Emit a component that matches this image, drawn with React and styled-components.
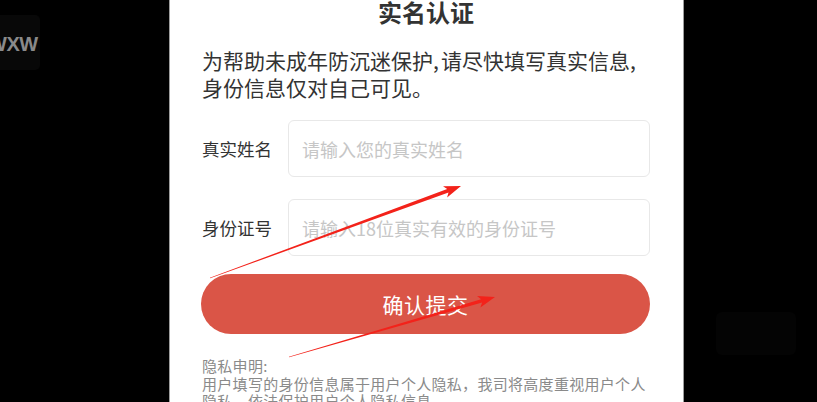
import React from 'react';
import styled, { createGlobalStyle } from 'styled-components';

const Global = createGlobalStyle`
  html, body { margin: 0; padding: 0; background: #000; overflow: hidden; }
  body { font-family: "Noto Sans CJK SC", "Noto Sans", sans-serif; }
  * { box-sizing: border-box; }
`;

const Screen = styled.div`
  position: relative;
  width: 817px;
  height: 402px;
  overflow: hidden;
  background: #000;
  display: flex;
`;

const LeftRail = styled.div`
  width: 169px;
  flex-shrink: 0;
  padding-top: 15px;
`;

const Tile = styled.div`
  width: 40px;
  height: 55px;
  background: #080808;
  overflow: hidden;
  padding-top: 19px;
  border-radius: 0 5px 5px 0;
`;

const TileText = styled.div`
  font-family: "Liberation Sans", Arial, sans-serif;
  font-weight: 700;
  font-size: 20px;
  line-height: 20px;
  color: #8a8a8a;
  margin-left: -12px;
  letter-spacing: -0.5px;
  white-space: nowrap;
`;

const Modal = styled.div`
  width: 515px;
  flex-shrink: 0;
  background: #fff;
  border-left: 1px solid #9d9d9d;
  border-right: 1px solid #9d9d9d;
  padding: 0 33px 0 32px;
`;

const Title = styled.h2`
  margin: 0;
  text-align: center;
  font-size: 24px;
  line-height: 24px;
  font-weight: 700;
  color: #333;
`;

const Intro = styled.p`
  margin: 23px 0 0;
  font-size: 21px;
  line-height: 27px;
  color: #333;
  white-space: nowrap;
`;

const Comma = styled.span`
  display: inline-block;
  width: 8px;
`;

const FormRow = styled.label`
  display: flex;
  align-items: center;
  height: 57px;
  margin-top: ${(p) => p.$gap}px;
`;

const FieldLabel = styled.span`
  width: 86px;
  flex-shrink: 0;
  font-size: 17.5px;
  color: #333;
`;

const Field = styled.input`
  flex: 1;
  min-width: 0;
  height: 57px;
  border: 1px solid #e8e8e8;
  border-radius: 6px;
  padding: 0 13px;
  font-family: inherit;
  font-size: 18px;
  color: #333;
  outline: none;
  background: #fff;
  &::placeholder { color: #c6c6c6; }
`;

const SubmitButton = styled.button`
  display: block;
  margin: 18px 0 0 -1px;
  height: 60px;
  width: 449px;
  border: none;
  border-radius: 30px;
  background: #da5547;
  color: #fff;
  font-family: inherit;
  font-size: 21px;
  letter-spacing: 0.5px;
  padding: 0;
`;

const Privacy = styled.div`
  margin-top: 23px;
  font-size: 15px;
  line-height: 17.5px;
  letter-spacing: 0.3px;
  color: #8a8a8a;
`;

const RightRail = styled.div`
  flex: 1;
  padding: 312px 0 0 32px;
`;

const GhostBox = styled.div`
  width: 80px;
  height: 43px;
  background: #040404;
  border-radius: 6px;
`;

const Overlay = styled.svg`
  position: absolute;
  left: 0;
  top: 0;
  pointer-events: none;
`;

function arrowPoints(tail, tip, headLen, headHalf, shaftBase) {
  const dx = tip[0] - tail[0];
  const dy = tip[1] - tail[1];
  const len = Math.hypot(dx, dy);
  const u = [dx / len, dy / len];
  const n = [-u[1], u[0]];
  const base = [tip[0] - u[0] * headLen, tip[1] - u[1] * headLen];
  const back = [tip[0] - u[0] * (headLen + 3), tip[1] - u[1] * (headLen + 3)];
  const p = (pt, k) => `${(pt[0] + n[0] * k).toFixed(1)},${(pt[1] + n[1] * k).toFixed(1)}`;
  return [
    p(tail, 0.3),
    p(base, shaftBase),
    p(back, headHalf),
    `${tip[0]},${tip[1]}`,
    p(back, -headHalf),
    p(base, -shaftBase),
    p(tail, -0.3),
  ].join(' ');
}

const Arrow = ({ tail, tip }) => (
  <polygon points={arrowPoints(tail, tip, 14, 6, 1.8)} fill="#f3221a" />
);

export default function App() {
  return (
    <>
      <Global />
      <Screen>
        <LeftRail>
          <Tile>
            <TileText>WXW</TileText>
          </Tile>
        </LeftRail>
        <Modal>
          <Title>实名认证</Title>
          <Intro>
            为帮助未成年防沉迷保护<Comma>,</Comma>请尽快填写真实信息<Comma>,</Comma>
            <br />
            身份信息仅对自己可见。
          </Intro>
          <FormRow $gap={19}>
            <FieldLabel>真实姓名</FieldLabel>
            <Field placeholder="请输入您的真实姓名" />
          </FormRow>
          <FormRow $gap={22}>
            <FieldLabel>身份证号</FieldLabel>
            <Field placeholder="请输入18位真实有效的身份证号" />
          </FormRow>
          <SubmitButton>确认提交</SubmitButton>
          <Privacy>
            <div>隐私申明:</div>
            <div>用户填写的身份信息属于用户个人隐私，我司将高度重视用户个人隐私，依法保护用户个人隐私信息。</div>
          </Privacy>
        </Modal>
        <RightRail>
          <GhostBox />
        </RightRail>
        <Overlay width="817" height="402" viewBox="0 0 817 402">
          <Arrow tail={[210, 278]} tip={[461, 186]} />
          <Arrow tail={[289, 357]} tip={[495, 297]} />
        </Overlay>
      </Screen>
    </>
  );
}
